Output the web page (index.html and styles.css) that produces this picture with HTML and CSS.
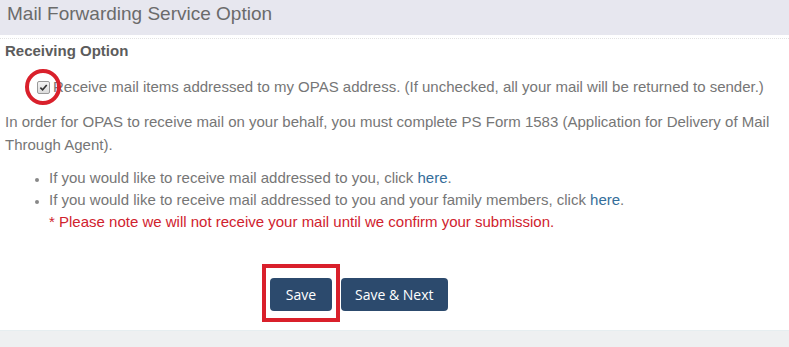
FILE: index.html
```html
<!DOCTYPE html>
<html>
<head>
<meta charset="utf-8">
<link rel="stylesheet" href="styles.css">
</head>
<body>
<div class="panel">
  <div class="panel-head">Mail Forwarding Service Option</div>
  <div class="panel-body">
    <div class="label">Receiving Option</div>
    <div class="check-row">
      <span class="check-wrap">
        <span class="checkbox"><svg viewBox="0 0 10 10" width="9" height="9"><path d="M1.5 5.2 L4 7.6 L8.6 2.2" fill="none" stroke="#333" stroke-width="1.8"/></svg></span>
        <span class="ring"></span>
      </span>
      <span>Receive mail items addressed to my OPAS address. (If unchecked, all your mail will be returned to sender.)</span>
    </div>
    <p class="info">In order for OPAS to receive mail on your behalf, you must complete PS Form 1583 (Application for Delivery of Mail Through Agent).</p>
    <ul class="options">
      <li>If you would like to receive mail addressed to you, click <a href="#">here</a>.</li>
      <li>If you would like to receive mail addressed to you and your family members, click <a href="#">here</a>.</li>
    </ul>
    <div class="note">* Please note we will not receive your mail until we confirm your submission.</div>
    <div class="actions">
      <span class="save-wrap">
        <button class="btn btn-save">Save</button>
        <span class="box"></span>
      </span>
      <button class="btn">Save &amp; Next</button>
    </div>
  </div>
</div>
<div class="footer"></div>
</body>
</html>
```
FILE: styles.css
```css
html, body {
  margin: 0;
  padding: 0;
  background: #fff;
}
body {
  font-family: "Liberation Sans", Arial, sans-serif;
  font-size: 15px;
  color: #767676;
  width: 789px;
  height: 347px;
  overflow: hidden;
}
.panel-head {
  height: 35px;
  background: #e7e7ef;
  color: #6b6b6b;
  font-size: 19px;
  line-height: 28px;
  padding-left: 7px;
  box-sizing: border-box;
}
.panel-body {
  margin-top: 3px;
  border-top: 1px dotted #e2e2e2;
  padding: 0 5px;
  height: 292px;
  box-sizing: border-box;
}
.label {
  font-weight: bold;
  font-size: 15px;
  color: #5c5c5c;
  margin-top: 1px;
  line-height: 22px;
}
.check-row {
  display: flex;
  align-items: center;
  margin-top: 14px;
  padding-left: 32px;
  line-height: 22px;
}
.check-wrap {
  position: relative;
  display: inline-flex;
  width: 16px;
  height: 13px;
}
.checkbox {
  width: 11px;
  height: 11px;
  border: 1px solid #9a9a9a;
  border-radius: 2px;
  background: linear-gradient(#f4f4f4, #dcdcdc);
  display: flex;
  align-items: center;
  justify-content: center;
}
.ring {
  position: absolute;
  left: -12px;
  top: -12px;
  width: 28px;
  height: 28px;
  border: 4px solid #d9202b;
  border-radius: 50%;
}
.info {
  margin: 12px 0 0;
  line-height: 23px;
}
.options {
  margin: 11px 0 0;
  padding-left: 44px;
  line-height: 22px;
}
.options li::marker {
  color: #888;
  font-size: 12px;
}
a {
  color: #356e9a;
  text-decoration: none;
}
.note {
  color: #d0222e;
  padding-left: 44px;
  line-height: 21px;
}
.actions {
  display: flex;
  gap: 9px;
  margin-top: 46px;
  padding-left: 265px;
}
.save-wrap {
  position: relative;
  display: inline-flex;
}
.btn {
  font-family: "Open Sans", sans-serif;
  font-size: 14px;
  color: #fff;
  background: #2c4a6d;
  border: none;
  border-radius: 4px;
  height: 33px;
  padding: 0 14px;
}
.btn-save {
  width: 62px;
  padding: 0;
}
.box {
  position: absolute;
  left: -8px;
  top: -14px;
  width: 70px;
  height: 50px;
  border: 4px solid #d9202b;
}
.footer {
  height: 17px;
  background: #eef0f1;
  border-top: 1px solid #e6eef0;
}
```
